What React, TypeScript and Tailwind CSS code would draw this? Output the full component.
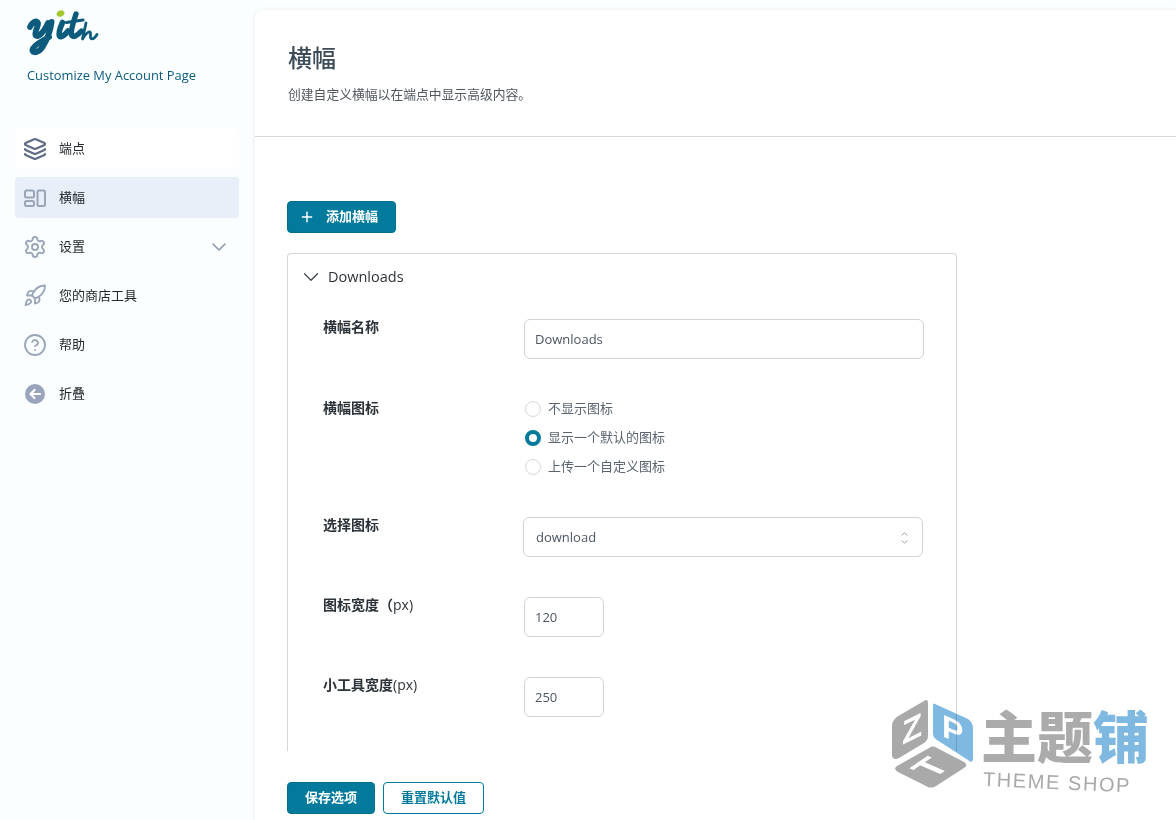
import { ChevronDown, ChevronUp, CircleHelp, Layers, Plus, Rocket, Settings } from "lucide-react";
import type { ReactNode } from "react";

const FONT = "font-['Open_Sans','Noto_Sans_CJK_SC',sans-serif]";

function YithLogo() {
  return (
    <svg width="72" height="46" viewBox="0 0 72 46" className="block">
      <ellipse cx="33.5" cy="3.5" rx="4" ry="3" fill="#a3c62b" transform="rotate(-25 33.5 3.5)" />
      <g fill="none" stroke="#0c5a7c" strokeLinecap="round" strokeLinejoin="round">
        <path d="M3 17C5 12 10 9.5 11 13C11.5 16.5 7.5 21 8.5 25C10 28.5 16 24 21 13" strokeWidth="5.8" />
        <path d="M24.5 12C23.5 20 20 30 15.5 37C12 42.5 6.5 43.5 5.5 40.5C5 37 13 32 22 27" strokeWidth="6" />
        <path d="M35.5 12.5C33.5 17 31 23 32.5 26C34 28 37.5 25.5 41 21" strokeWidth="5.6" />
        <path d="M49 4C47 10 43.5 20 44.5 25C46 28 50 26 54.5 21" strokeWidth="5.4" />
        <path d="M39.5 12.5L56 10" strokeWidth="3.2" />
        <path d="M59 13C58 18 56.5 24 55.5 29C58 25 61 21.5 63 22C64.5 23 62.5 27 64 28.5C66 29.5 68.5 27 70 24.5" strokeWidth="2.8" />
      </g>
    </svg>
  );
}

function BannersIcon() {
  return (
    <svg width="24" height="24" viewBox="0 0 24 24" fill="none" stroke="#9aa5b8" strokeWidth="2">
      <rect x="2" y="4.5" width="9" height="7" rx="1.5" />
      <rect x="2" y="15" width="9" height="5" rx="1.5" />
      <rect x="14.5" y="4.5" width="7.5" height="15.5" rx="1.5" />
    </svg>
  );
}

function CollapseIcon() {
  return (
    <svg width="22" height="22" viewBox="0 0 22 22">
      <circle cx="11" cy="11" r="10" fill="#9aa5bd" />
      <path d="M16 11H7M10.5 7L6.5 11L10.5 15" fill="none" stroke="#fff" strokeWidth="2.2" strokeLinecap="round" strokeLinejoin="round" />
    </svg>
  );
}

function NavItem({ icon, label, active, bright, caret }: { icon: ReactNode; label: string; active?: boolean; bright?: boolean; caret?: boolean }) {
  return (
    <div
      className={`flex h-[41px] items-center rounded pl-[8px] pr-[8px] text-[13px] text-[#23282d] ${
        active ? "bg-[#e9eff8]" : bright ? "bg-white" : ""
      }`}
    >
      <span className="flex w-[24px] justify-center">{icon}</span>
      <span className="ml-[12px] flex-1">{label}</span>
      {caret && <ChevronDown className="h-[24px] w-[24px] text-[#8d99ad]" strokeWidth={1.6} />}
    </div>
  );
}

function Radio({ label, checked }: { label: string; checked?: boolean }) {
  return (
    <div className="flex h-[29px] items-center gap-[7px] pl-[1px] text-[13px] text-[#5b6570]">
      {checked ? (
        <span className="h-[16px] w-[16px] rounded-full border-[4.5px] border-[#017a9b] bg-white" />
      ) : (
        <span className="h-[16px] w-[16px] rounded-full border border-[#d5d8dc] bg-white" />
      )}
      {label}
    </div>
  );
}

function FormRow({ label, suffix, height, children }: { label: string; suffix?: string; height: string; children: ReactNode }) {
  return (
    <div className={`flex ${height}`}>
      <div className="-mt-[1px] w-[201px] text-[14px] font-semibold leading-[18px] text-[#2c3338]">
        {label}
        {suffix && <span className="font-normal">{suffix}</span>}
      </div>
      {children}
    </div>
  );
}

const inputClass = "flex h-[40px] items-center rounded-[6px] border border-[#d0d3d7] bg-white px-[10px] pt-[1px] text-[13px] text-[#4b5563]";

function Watermark() {
  return (
    <div className="pointer-events-none absolute left-[890px] top-[698px] flex select-none items-start mix-blend-multiply">
      <svg width="92" height="92" viewBox="0 0 92 92" className="shrink-0">
        <path d="M34 3L10 17C6 19 2 23 2 28V57C2 61 6 62 9 60L34 45C37 43 38 41 38 37V6C38 2 37 1 34 3Z" fill="#a9a9a9" />
        <path d="M45 6L78 21C81 23 83 26 83 30V60C83 64 81 65 78 62L47 42C44 40 43 38 43 35V9C43 5 43 5 45 6Z" fill="#7fb9e2" />
        <path d="M39 50L7 68C4 70 5 72 8 74L36 88C39 90 43 90 46 88L74 70C77 68 77 66 74 64L47 50C44 48 42 48 39 50Z" fill="#a9a9a9" />
        <text fontFamily="Liberation Sans, sans-serif" fontWeight="700" fontSize="33" fill="#fff" transform="matrix(1 -0.5 0 1 12 47)">Z</text>
        <text fontFamily="Liberation Sans, sans-serif" fontWeight="700" fontSize="32" fill="#fff" transform="matrix(1 0.45 0 1 52 38)">P</text>
        <text fontFamily="Liberation Sans, sans-serif" fontWeight="700" fontSize="30" fill="#fff" transform="matrix(1.04 -0.71 1.16 0.51 43 81)">T</text>
      </svg>
      <div className="ml-[1px] mt-[5px] font-['Noto_Sans_CJK_SC',sans-serif]">
        <div className="-ml-[2px] flex h-[62px] items-center text-[56px] font-black leading-[62px]">
          <span className="text-[#ababab]">主题</span>
          <span className="text-[#7fb9e2]">铺</span>
        </div>
        <div className="mt-[3px] origin-left rotate-[2.5deg] whitespace-nowrap font-['Liberation_Sans',sans-serif] text-[20px] leading-[22px] tracking-[1.6px] text-[#a9a9a9]">THEME SHOP</div>
      </div>
    </div>
  );
}

export default function App() {
  return (
    <div className={`${FONT} relative flex h-[820px] w-[1176px] overflow-hidden bg-[#fafeff]`}>
      <aside className="w-[255px] shrink-0 px-[15px]">
        <div className="pl-[12px] pt-[10px]">
          <YithLogo />
          <div className="mt-[10px] text-[12.9px] font-medium leading-[18px] text-[#0c5a7c]">Customize My Account Page</div>
        </div>
        <nav className="mt-[44px] flex w-[224px] flex-col gap-[8px]">
          <NavItem bright icon={<Layers className="h-[26px] w-[26px] text-[#5f6c85]" strokeWidth={2.2} />} label="端点" />
          <NavItem active icon={<BannersIcon />} label="横幅" />
          <NavItem caret icon={<Settings className="h-[24px] w-[24px] text-[#9aa5b8]" strokeWidth={1.9} />} label="设置" />
          <NavItem icon={<Rocket className="h-[25px] w-[25px] text-[#9aa5b8]" strokeWidth={1.8} />} label="您的商店工具" />
          <NavItem icon={<CircleHelp className="h-[24px] w-[24px] text-[#9aa5b8]" strokeWidth={1.8} />} label="帮助" />
          <NavItem icon={<CollapseIcon />} label="折叠" />
        </nav>
      </aside>

      <main className="mt-[10px] flex-1 rounded-tl-[8px] bg-white shadow-[0_0_4px_rgba(0,0,0,0.08)]">
        <header className="h-[127px] border-b border-[#d8d8d8] pl-[33px] pt-[31px]">
          <h1 className="text-[24px] font-medium leading-[34px] text-[#3c4b57]">横幅</h1>
          <p className="mt-[10px] text-[12.8px] leading-[18px] text-[#50575e]">创建自定义横幅以在端点中显示高级内容。</p>
        </header>

        <div className="pl-[32px] pt-[64px]">
          <button type="button" className="flex h-[32px] w-[109px] items-center rounded-[4px] border border-[#01708e] bg-[#017a9b] pl-[11px] text-[13px] font-semibold text-white">
            <Plus className="h-[16px] w-[16px]" strokeWidth={2.2} />
            <span className="ml-[11px]">添加横幅</span>
          </button>

          <section className="mt-[20px] h-[498px] w-[670px] overflow-hidden rounded-t-[4px] border-x border-t border-[#d6d6d6] bg-white">
            <div className="flex h-[45px] items-center pl-[10px] text-[14.5px] text-[#2c3338]">
              <ChevronDown className="h-[26px] w-[26px] text-[#3c434a]" strokeWidth={1.1} />
              <span className="ml-[4px] font-medium">Downloads</span>
            </div>
            <div className="pl-[35px] pt-[20px]">
              <FormRow label="横幅名称" height="h-[81px]">
                <div className={`${inputClass} w-[400px]`}>Downloads</div>
              </FormRow>
              <FormRow label="横幅图标" height="h-[117px]">
                <div className="-mt-[6px] flex flex-col">
                  <Radio label="不显示图标" />
                  <Radio checked label="显示一个默认的图标" />
                  <Radio label="上传一个自定义图标" />
                </div>
              </FormRow>
              <FormRow label="选择图标" height="h-[80px]">
                <div className={`${inputClass} -ml-[1px] w-[400px] justify-between pl-[12px] pr-[12px]`}>
                  download
                  <span className="flex flex-col text-[#5f6873]">
                    <ChevronUp className="-mb-[2px] h-[10px] w-[11px]" strokeWidth={1.6} />
                    <ChevronDown className="h-[10px] w-[11px]" strokeWidth={1.6} />
                  </span>
                </div>
              </FormRow>
              <FormRow label="图标宽度（" suffix="px)" height="h-[80px]">
                <div className={`${inputClass} w-[80px]`}>120</div>
              </FormRow>
              <FormRow label="小工具宽度" suffix="(px)" height="h-[80px]">
                <div className={`${inputClass} w-[80px]`}>250</div>
              </FormRow>
            </div>
          </section>

          <div className="mt-[31px] flex gap-[8px] text-[13px] font-semibold">
            <button type="button" className="h-[32px] w-[88px] rounded-[4px] border border-[#01708e] bg-[#017a9b] text-white">保存选项</button>
            <button type="button" className="h-[32px] w-[101px] rounded-[4px] border border-[#017a9b] bg-white text-[#017a9b]">重置默认值</button>
          </div>
        </div>
      </main>

      <Watermark />
    </div>
  );
}
